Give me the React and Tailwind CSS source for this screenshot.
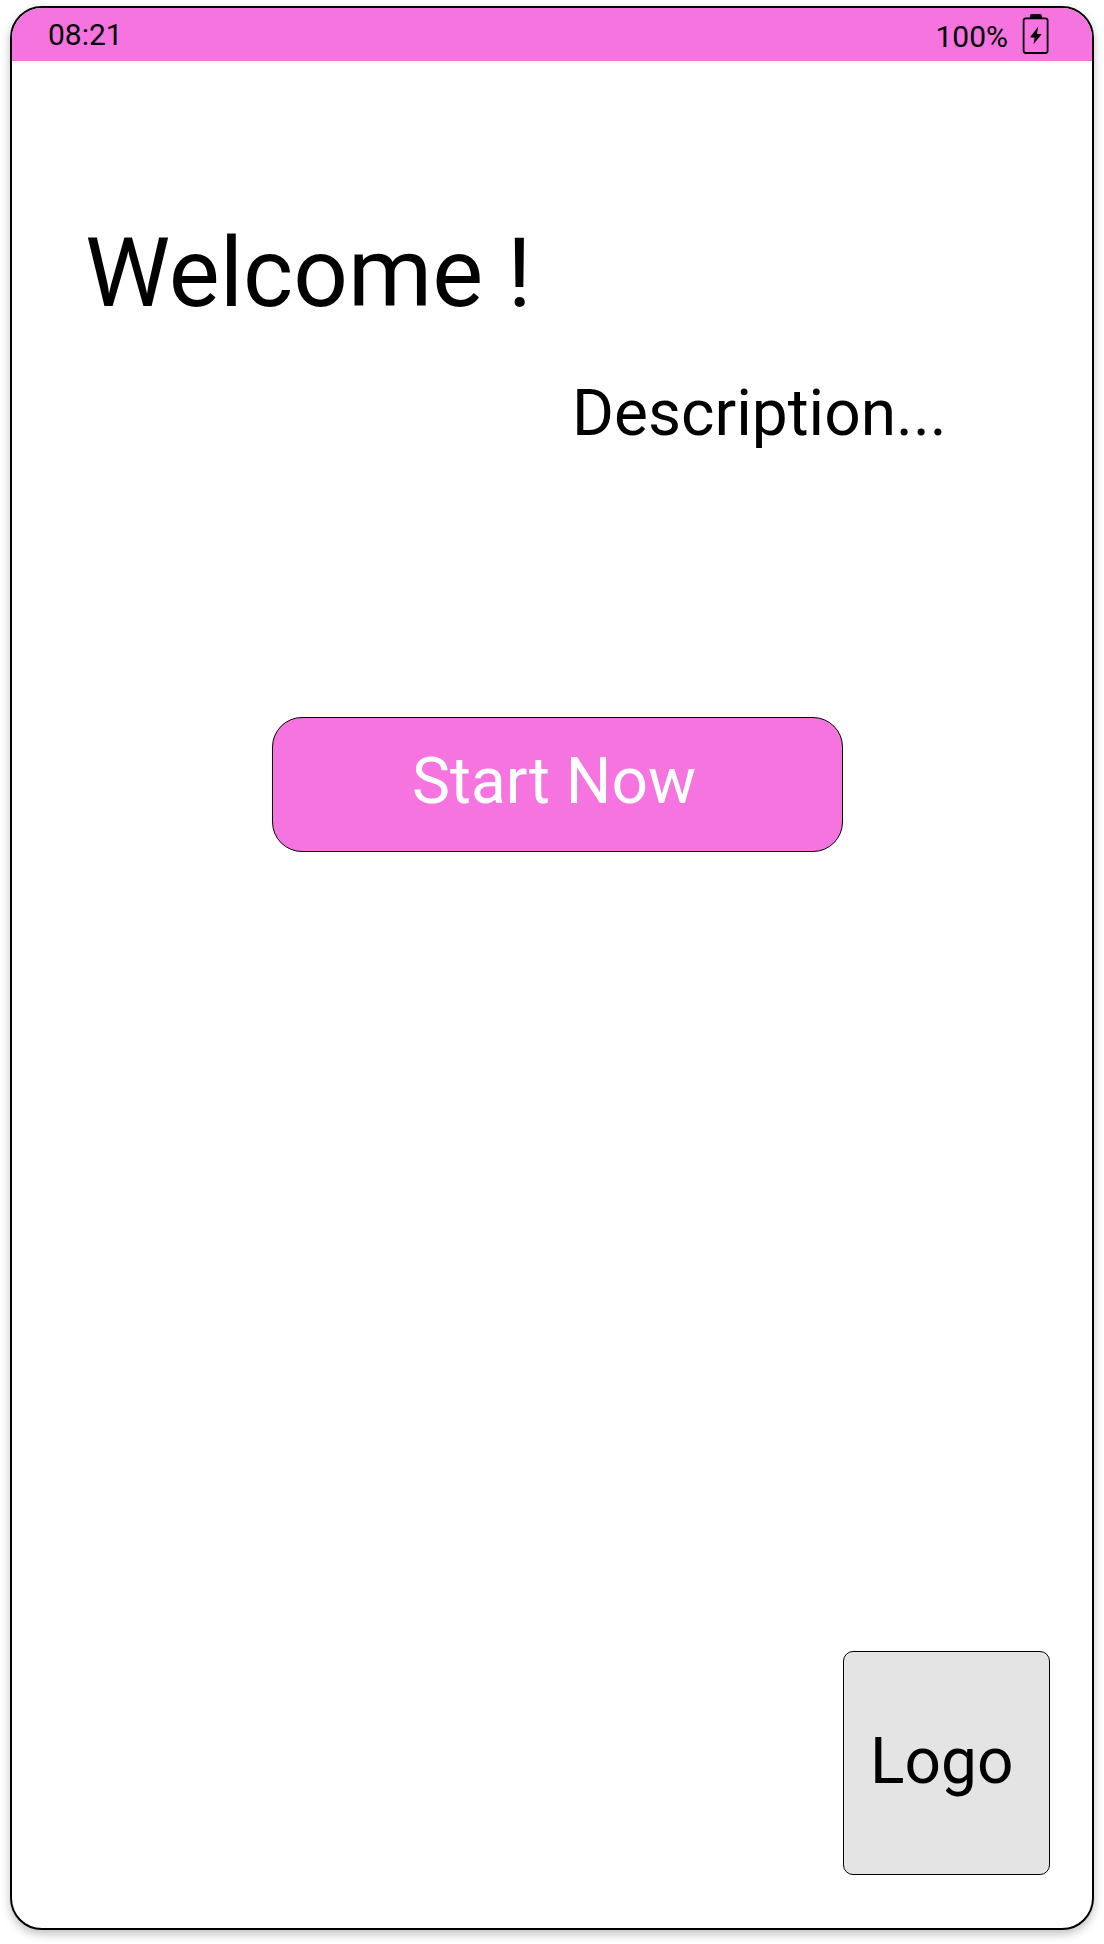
function BatteryIcon() {
  return (
    <svg className="ml-[13px] mt-[5px] h-[42px] w-[28px] shrink-0" viewBox="0 0 28 42" fill="none">
      <path d="M8.9 5V3Q8.9 1 10.9 1H18.9Q20.9 1 20.9 3V5Z" fill="#000" />
      <rect x="2.6" y="5.4" width="24" height="34.6" rx="2.2" stroke="#000" strokeWidth="1.8" />
      <path d="M17.3 13.5L9 24.2L13.6 24.7L12.5 31.3L20.6 21.3L15.9 20.7Z" fill="#000" />
    </svg>
  );
}

function StatusBar() {
  return (
    <header className="flex h-[53px] items-start bg-[#F674E0] text-[30px] leading-[35px]">
      <span className="ml-[36px] mt-[9px]">08:21</span>
      <span className="ml-auto mt-[11px]">100%</span>
      <BatteryIcon />
      <span className="w-[43px]" />
    </header>
  );
}

export default function App() {
  return (
    <div className="h-[1944px] w-[1104px] bg-white px-[10px] pt-[6px] font-[Roboto,sans-serif] text-black">
      <main className="flex h-[1924px] w-[1084px] flex-col overflow-hidden rounded-[32px] border-2 border-black bg-white shadow-[0_4px_10px_rgba(0,0,0,0.25)]">
        <StatusBar />
        <h1 className="ml-[73px] mt-[156px] text-[96px] leading-[112px]">Welcome !</h1>
        <p className="ml-[560px] mt-[47px] text-[64px] leading-[75px]">Description...</p>
        <button className="ml-[260px] mt-[266px] flex h-[135px] w-[571px] items-start rounded-[30px] border border-black bg-[#F674E0] pl-[139px] pt-[26px] text-[64px] leading-[75px] text-white">
          Start Now
        </button>
        <div className="mb-[53px] mr-[42px] mt-auto flex h-[224px] w-[207px] items-start self-end rounded-[10px] border border-black bg-[#E4E4E4] pl-[26px] pt-[72px] text-[64px] leading-[75px]">
          Logo
        </div>
      </main>
    </div>
  );
}
